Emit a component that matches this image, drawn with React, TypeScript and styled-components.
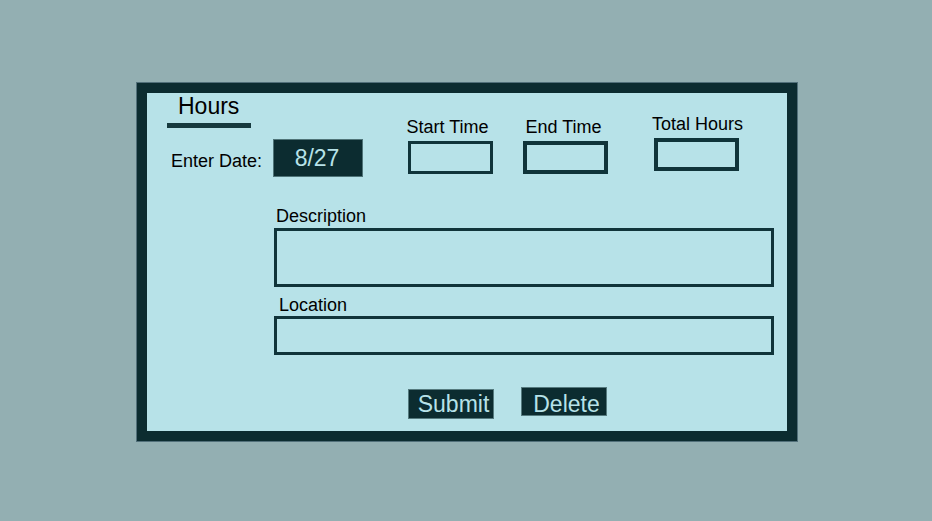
import React from "react";
import styled, { createGlobalStyle } from "styled-components";

// colours taken from the mockup
const DARK = "#0c2c30";
const PANEL = "#b7e2e8";

const GlobalStyle = createGlobalStyle`
  body {
    margin: 0;
    background-color: #93afb2;
    font-family: "Liberation Sans", Arial, sans-serif;
  }
`;

const Page = styled.div`
  min-height: 100vh;
  display: flex;
  justify-content: center;
  align-items: flex-start;
  padding: 83px 0 0 2px;
  box-sizing: border-box;
`;

const Card = styled.form`
  width: 660px;
  height: 358px;
  box-sizing: border-box;
  border: 10px solid ${DARK};
  outline: 1px solid #52707a;
  background-color: ${PANEL};
  display: flex;
  flex-direction: column;
`;

const TopRow = styled.div`
  display: flex;
  align-items: flex-start;
`;

const LeftGroup = styled.div`
  margin-left: 20px;
  width: 196px;
  display: flex;
  flex-direction: column;
`;

const Title = styled.h1`
  margin: 0;
  padding-left: 11px;
  font-size: 23px;
  font-weight: normal;
  line-height: 26px;
  color: #000;
`;

const Rule = styled.div`
  margin-top: 4px;
  width: 84px;
  height: 5px;
  background-color: #163a3e;
`;

const DateRow = styled.div`
  margin-top: 11px;
  display: flex;
  align-items: flex-start;
`;

const DateLabel = styled.label`
  margin: 12px 0 0 4px;
  font-size: 18px;
  line-height: 21px;
  color: #000;
  white-space: nowrap;
`;

const DateBox = styled.div`
  margin-left: 11px;
  width: 90px;
  height: 38px;
  box-sizing: border-box;
  padding-right: 2px;
  background-color: ${DARK};
  border: 1px solid #4f7478;
  color: ${PANEL};
  font-size: 23px;
  display: flex;
  align-items: center;
  justify-content: center;
`;

const TimeField = styled.div<{ $offset: number; $top: number }>`
  margin-left: ${({ $offset }) => $offset}px;
  margin-top: ${({ $top }) => $top}px;
  width: 85px;
  display: flex;
  flex-direction: column;
  align-items: center;
`;

// $nudge moves the label sideways from the centre of its box
const TimeLabel = styled.label<{ $nudge: number }>`
  margin-left: ${({ $nudge }) => Math.max(0, $nudge * 2)}px;
  margin-right: ${({ $nudge }) => Math.max(0, -$nudge * 2)}px;
  font-size: 18px;
  line-height: 21px;
  color: #000;
  white-space: nowrap;
`;

const TimeBox = styled.div<{ $weight: number }>`
  margin-top: 3px;
  width: 85px;
  height: 33px;
  box-sizing: border-box;
  border: ${({ $weight }) => $weight}px solid #10343a;
`;

const FieldBlock = styled.div<{ $top: number }>`
  margin-left: 127px;
  margin-top: ${({ $top }) => $top}px;
  width: 500px;
  display: flex;
  flex-direction: column;
`;

const FieldLabel = styled.label<{ $indent: number }>`
  padding-left: ${({ $indent }) => $indent}px;
  font-size: 18px;
  line-height: 21px;
  color: #000;
`;

const FieldBox = styled.div<{ $height: number; $gap: number }>`
  margin-top: ${({ $gap }) => $gap}px;
  height: ${({ $height }) => $height}px;
  box-sizing: border-box;
  border: 3px solid #10343a;
`;

const ButtonRow = styled.div`
  margin: 32px 0 0 261px;
  display: flex;
  align-items: flex-start;
  gap: 27px;
`;

const Btn = styled.button<{ $top: number; $height: number; $padTop: number }>`
  margin-top: ${({ $top }) => $top}px;
  width: 86px;
  height: ${({ $height }) => $height}px;
  box-sizing: border-box;
  padding: ${({ $padTop }) => $padTop}px 0 0 5px;
  background-color: ${DARK};
  border: 1px solid #557a7e;
  color: ${PANEL};
  font-family: inherit;
  font-size: 23px;
  line-height: 26px;
  display: flex;
  align-items: flex-start;
  justify-content: center;
  overflow: visible;
  cursor: pointer;
`;

function App() {
  return (
    <>
      <GlobalStyle />
      <Page>
        <Card>
          <TopRow>
            <LeftGroup>
              <Title>Hours</Title>
              <Rule />
              <DateRow>
                <DateLabel>Enter Date:</DateLabel>
                <DateBox>8/27</DateBox>
              </DateRow>
            </LeftGroup>
            <TimeField $offset={45} $top={24}>
              <TimeLabel $nudge={-3}>Start Time</TimeLabel>
              <TimeBox $weight={3} />
            </TimeField>
            <TimeField $offset={30} $top={24}>
              <TimeLabel $nudge={-2}>End Time</TimeLabel>
              <TimeBox $weight={4} />
            </TimeField>
            <TimeField $offset={46} $top={21}>
              <TimeLabel $nudge={1}>Total Hours</TimeLabel>
              <TimeBox $weight={4} />
            </TimeField>
          </TopRow>

          <FieldBlock $top={29}>
            <FieldLabel $indent={2}>Description</FieldLabel>
            <FieldBox $height={59} $gap={1} />
          </FieldBlock>
          <FieldBlock $top={8}>
            <FieldLabel $indent={5}>Location</FieldLabel>
            <FieldBox $height={39} $gap={0} />
          </FieldBlock>

          <ButtonRow>
            <Btn type="submit" $top={2} $height={30} $padTop={1}>
              Submit
            </Btn>
            <Btn type="button" $top={0} $height={29} $padTop={3}>
              Delete
            </Btn>
          </ButtonRow>
        </Card>
      </Page>
    </>
  );
}

export default App;
